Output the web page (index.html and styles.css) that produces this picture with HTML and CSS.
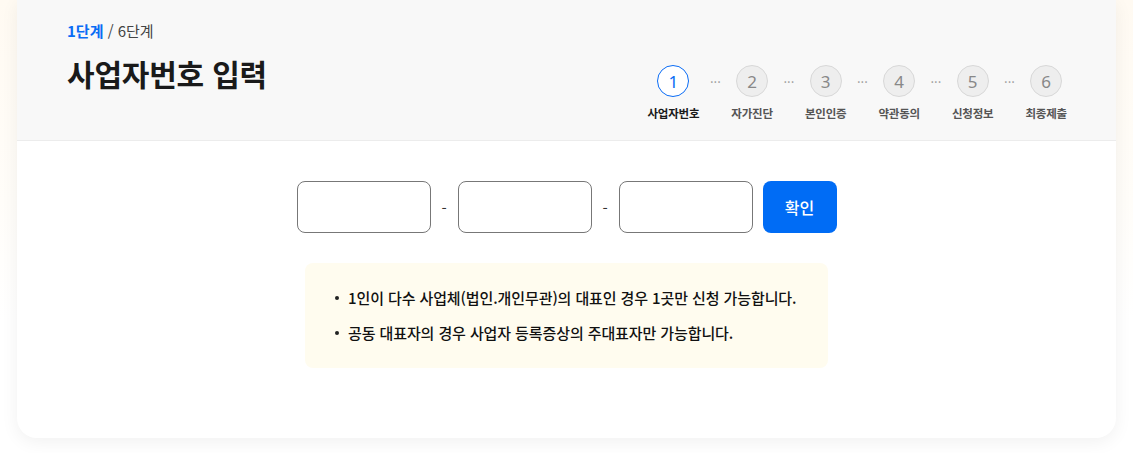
FILE: index.html
```html
<!DOCTYPE html>
<html lang="ko">
<head>
<meta charset="utf-8">
<title>사업자번호 입력</title>
<link rel="stylesheet" href="styles.css">
</head>
<body>
<div class="card">
  <header class="head">
    <div class="head-left">
      <div class="stage"><span class="stage-cur">1단계</span> / 6단계</div>
      <h1 class="title">사업자번호 입력</h1>
    </div>
    <ol class="steps">
      <li class="step active"><span class="circle">1</span><span class="label">사업자번호</span></li>
      <li class="sep">···</li>
      <li class="step"><span class="circle">2</span><span class="label">자가진단</span></li>
      <li class="sep">···</li>
      <li class="step"><span class="circle">3</span><span class="label">본인인증</span></li>
      <li class="sep">···</li>
      <li class="step"><span class="circle">4</span><span class="label">약관동의</span></li>
      <li class="sep">···</li>
      <li class="step"><span class="circle">5</span><span class="label">신청정보</span></li>
      <li class="sep">···</li>
      <li class="step"><span class="circle">6</span><span class="label">최종제출</span></li>
    </ol>
  </header>
  <main class="body">
    <form class="bizno">
      <input class="field" type="text" maxlength="3">
      <span class="dash">-</span>
      <input class="field" type="text" maxlength="2">
      <span class="dash">-</span>
      <input class="field" type="text" maxlength="5">
      <button class="btn" type="button">확인</button>
    </form>
    <ul class="notice">
      <li>1인이 다수 사업체(법인.개인무관)의 대표인 경우 1곳만 신청 가능합니다.</li>
      <li>공동 대표자의 경우 사업자 등록증상의 주대표자만 가능합니다.</li>
    </ul>
  </main>
</div>
</body>
</html>
```
FILE: styles.css
```css
* { box-sizing: border-box; }
html, body { margin: 0; padding: 0; }
body {
  font-family: "Noto Sans CJK KR", "Noto Sans", sans-serif;
  background: linear-gradient(180deg, #fffaf2 0, #fffdf9 200px, #ffffff 320px);
  padding: 0 17px 16px;
  color: #222;
}
.card {
  background: #fff;
  border-radius: 0 0 20px 20px;
  box-shadow: 0 4px 18px rgba(0, 0, 0, 0.06);
  overflow: hidden;
}
.head {
  background: #f8f8f8;
  border-bottom: 1px solid #ececec;
  height: 141px;
  padding: 19px 49px 0 50px;
  display: flex;
  justify-content: space-between;
  align-items: flex-start;
}
.stage {
  font-size: 15px;
  line-height: 24px;
  color: #444;
}
.stage-cur { color: #0a6cf5; font-weight: 700; }
.title {
  margin: 11px 0 0;
  font-size: 30px;
  line-height: 38px;
  font-weight: 700;
  letter-spacing: -0.2px;
  color: #1a1a1a;
}
.steps {
  list-style: none;
  margin: 46px 0 0;
  padding: 0;
  display: flex;
  align-items: flex-start;
}
.step {
  display: flex;
  flex-direction: column;
  align-items: center;
}
.circle {
  width: 32px;
  height: 32px;
  border-radius: 50%;
  background: #eeeeee;
  border: 1px solid #d8d8d8;
  color: #888;
  font-family: "Noto Sans", sans-serif;
  font-size: 17px;
  display: flex;
  align-items: center;
  justify-content: center;
}
.label {
  margin-top: 7px;
  font-size: 11.5px;
  line-height: 18px;
  font-weight: 700;
  letter-spacing: -0.2px;
  color: #555;
  white-space: nowrap;
}
.active .circle {
  background: #fff;
  border-color: #0a6cf5;
  color: #0a6cf5;
}
.active .label { color: #1a1a1a; }
.sep {
  width: 32px;
  height: 32px;
  line-height: 34px;
  text-align: center;
  color: #999;
  font-size: 13px;
}
.body {
  padding: 40px 0 70px;
  display: flex;
  flex-direction: column;
  align-items: center;
  gap: 30px;
}
.bizno {
  display: flex;
  align-items: center;
  gap: 10px;
  margin: 0;
}
.field {
  width: 134px;
  height: 52px;
  border: 1px solid #777;
  border-radius: 8px;
  background: #fff;
  font-size: 16px;
  padding: 0 12px;
}
.dash {
  font-size: 15px;
  color: #333;
  width: 7px;
  text-align: center;
}
.btn {
  width: 74px;
  height: 52px;
  border: 0;
  border-radius: 8px;
  background: #006cf5;
  color: #fff;
  font-family: "Noto Sans CJK KR", sans-serif;
  font-size: 16px;
  font-weight: 500;
}
.notice {
  margin: 0;
  width: 523px;
  background: #fffcef;
  border-radius: 8px;
  padding: 17px 20px 18px 30px;
  list-style: none;
  font-size: 15px;
  line-height: 35px;
  font-weight: 500;
  letter-spacing: -0.1px;
  color: #111;
}
.notice li {
  display: flex;
  align-items: center;
  white-space: nowrap;
}
.notice li::before {
  content: "";
  width: 4px;
  height: 4px;
  border-radius: 50%;
  background: #222;
  margin-right: 9px;
  flex: none;
}
```
